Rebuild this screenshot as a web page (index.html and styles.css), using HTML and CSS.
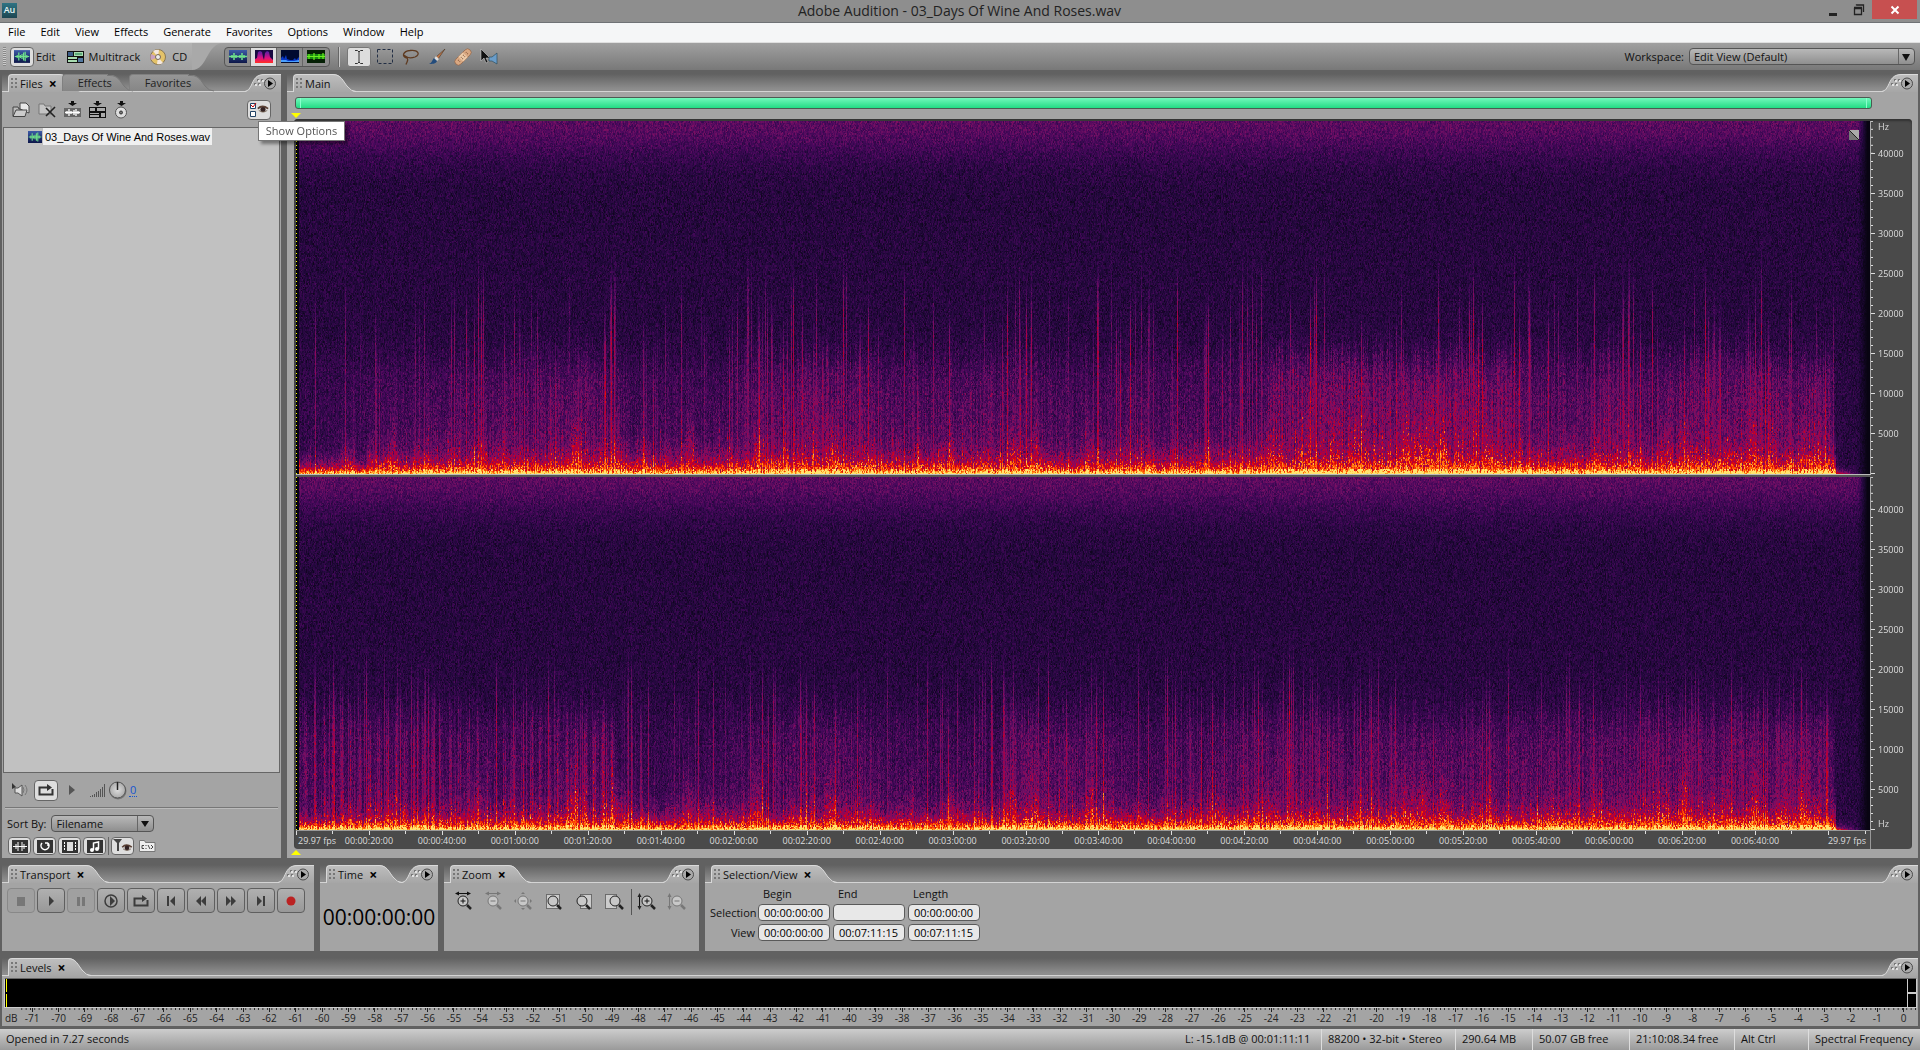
FILE: index.html
```html
<!DOCTYPE html>
<html lang="en">
<head>
<meta charset="utf-8">
<title>Adobe Audition - 03_Days Of Wine And Roses.wav</title>
<link rel="stylesheet" href="styles.css">
</head>
<body>
<svg class="defs" aria-hidden="true">
  <defs>
    <linearGradient id="gTab" x1="0" y1="0" x2="0" y2="1"><stop offset="0" stop-color="#bebebe"/><stop offset="1" stop-color="#a6a6a6"/></linearGradient>
    <linearGradient id="gDim" x1="0" y1="0" x2="0" y2="1"><stop offset="0" stop-color="#969696"/><stop offset="1" stop-color="#868686"/></linearGradient>
    <linearGradient id="gBlue" x1="0" y1="0" x2="0" y2="1"><stop offset="0" stop-color="#3d5ba8"/><stop offset="1" stop-color="#0c1648"/></linearGradient>
    <linearGradient id="gSpec" x1="0" y1="0" x2="0" y2="1"><stop offset="0" stop-color="#5020a8"/><stop offset=".6" stop-color="#e01080"/><stop offset="1" stop-color="#ff3020"/></linearGradient>
    <radialGradient id="gKnob"><stop offset="0" stop-color="#ddd"/><stop offset="1" stop-color="#aaa"/></radialGradient>
  </defs>
  <symbol id="cap" viewBox="0 0 26 18"><path d="M0 0H3C11 0 13 7 17 12Q21 18 26 18H0Z" fill="url(#gTab)"/><path d="M0 .5H3C11 .5 13 7 17 12Q21 17.500 26 17.500" fill="none" stroke="#dadada"/></symbol>
  <symbol id="capdim" viewBox="0 0 26 18"><path d="M0 1H3C11 1 13 7 17 12Q21 17 26 17H0Z" fill="url(#gDim)"/><path d="M0 1.500H3C11 1.500 13 7 17 12Q21 17 26 17" fill="none" stroke="#777"/></symbol>
  <symbol id="corner" viewBox="0 0 36 18"><path d="M0 18Q4 17 6 12C9 5 11 0 20 0H36V18Z" fill="url(#gTab)"/><path d="M0 17.500Q4 17 6 12C9 5 11 .5 20 .5H36" fill="none" stroke="#dadada"/>
    <g fill="#777"><path d="M9 9h2v2h-2zM13 9h2v2h-2zM12 5h2v2h-2zM16 5h2v2h-2z"/></g><g fill="#e2e2e2"><path d="M10 10h2v2h-2zM14 10h2v2h-2zM13 6h2v2h-2zM17 6h2v2h-2z"/></g>
    <circle cx="25" cy="9.500" r="5.500" fill="#aaa" stroke="#4c4c4c"/><path d="M23 6v7l5-3.500z" fill="#000"/></symbol>
  <symbol id="wave" viewBox="0 0 20 16"><path d="M0 0h20v16H0z" fill="url(#gBlue)"/><path d="M1 8h18M4 6v4M6 3v10M8 6v4M10 5v6M12 3v10M14 2v12M16 6v4" stroke="#6fe28c" stroke-width="1.500"/></symbol>
  <symbol id="multi" viewBox="0 0 17 12"><path d="M0 0h17v12H0z" fill="#111"/><path d="M1 1h5v4H1z" fill="#3c5c88"/><path d="M7 1h9v4H7zM1 6h9v2H1zM1 9h9v2H1z" fill="#a8dcb0"/><path d="M11 7h5v4h-5z" fill="#5378a0"/><path d="M8 3h7" stroke="#174"/></symbol>
  <symbol id="loop" viewBox="0 0 16 14"><path d="M5 4.500H1.500V11.500H14.500V6" fill="none" stroke="currentColor" stroke-width="2"/><path d="M5 3.500h4V1l5 3.500L9 8V5.500H5z" fill="currentColor"/></symbol>
  <symbol id="mag" viewBox="0 0 20 20"><circle cx="9" cy="9" r="5" fill="#c8c8c8" stroke="currentColor"/><path d="M13 13l4 4" stroke="currentColor" stroke-width="2.500"/></symbol>
  <symbol id="eye" viewBox="0 0 14 10"><path d="M1 5Q6 0 13 5Q7 10 1 5z" fill="#ddd"/><path d="M1 4Q6-1 13 4" fill="none" stroke="#5a4034" stroke-width="2"/><circle cx="7" cy="5" r="3" fill="#322"/><path d="M2 6Q7 10 12 6" stroke="#765" fill="none"/></symbol>
</svg>

<header class="titlebar">
  <span class="logo">Au</span>
  <h1>Adobe Audition - 03_Days Of Wine And Roses.wav</h1>
  <div class="winbtns">
    <button type="button" aria-label="Minimize"><svg width="10" height="14"><path d="M1 10h8v3H1z" fill="#222"/></svg></button>
    <button type="button" aria-label="Restore"><svg width="12" height="12"><path d="M1.500 4.500h7v6h-7zM1 3.500h8M3.500 1.500V1h7v7" fill="none" stroke="#222" stroke-width="1.300"/></svg></button>
    <button type="button" class="close" aria-label="Close"><svg width="10" height="10"><path d="M1.500 1.500l7 7M8.500 1.500l-7 7" stroke="#fff" stroke-width="2"/></svg></button>
  </div>
</header>
<nav class="menubar">
  <button type="button">File</button><button type="button">Edit</button><button type="button">View</button><button type="button">Effects</button><button type="button">Generate</button><button type="button">Favorites</button><button type="button">Options</button><button type="button">Window</button><button type="button">Help</button>
</nav>

<div class="toolbar">
  <div class="modes">
    <span class="handle"></span>
    <button type="button" class="mode"><span class="pressed"><svg width="16" height="15"><use href="#wave"/></svg></span>Edit</button>
    <button type="button" class="mode multi"><svg width="17" height="12"><use href="#multi"/></svg>Multitrack</button>
    <button type="button" class="mode cd"><svg width="16" height="16" viewBox="0 0 16 16"><circle cx="8" cy="8" r="7.500" fill="#e4c268" stroke="#875"/><path d="M8 8L3 2A8 8 0 0 1 9 .8zM8 8l5 6a8 8 0 0 1-6 1z" fill="#f4e8e0"/><path d="M8 8L1 5a8 8 0 0 0 0 6z" fill="#c9a0c0"/><circle cx="8" cy="8" r="2.500" fill="#eee" stroke="#765"/></svg>CD</button>
  </div>
  <svg class="sweep" width="32" height="27" viewBox="0 0 32 27"><path d="M0 0H32C14 0 16 27 0 27Z" fill="#a9a9a9"/></svg>
  <div class="views">
    <button type="button" aria-label="Waveform view"><svg width="18" height="13" viewBox="0 0 18 13"><path d="M0 0h18v13H0z" fill="url(#gBlue)"/><path d="M0 6.500h18M3 5v3M5 3v7M7 5v3M11 5v3M13 3v7M15 5v3" stroke="#6fe28c" stroke-width="1.500"/></svg></button>
    <button type="button" class="on" aria-label="Spectral frequency view"><svg width="18" height="13" viewBox="0 0 18 13"><path d="M0 0h18v13H0z" fill="#180a40"/><path d="M0 13V9l2-1 1-6 2-1 2 1 1 5 1 3 1-7 2-2 2 1 1 5 3 3v3z" fill="url(#gSpec)"/></svg></button>
    <button type="button" aria-label="Spectral pan view"><svg width="18" height="13" viewBox="0 0 18 13"><path d="M0 0h18v13H0z" fill="#000a30"/><path d="M0 12V8l2-2 1 3 2-4 1 4 3 1 3 0 2-2 1 2 3-3v5z" fill="#0838c8"/><path d="M0 10h5l2 1h6l5-1v2H0z" fill="#4aa0ff"/></svg></button>
    <button type="button" aria-label="Spectral phase view"><svg width="18" height="13" viewBox="0 0 18 13"><path d="M0 0h18v13H0z" fill="#052005"/><path d="M0 4h18v5H0z" fill="#188a10"/><path d="M0 6.500h18M2 4v5M7 3v7M12 4v5M16 3v6" stroke="#6cf020" stroke-width="1.200"/></svg></button>
  </div>
  <span class="sep"></span>
  <div class="tools">
    <button type="button" class="on" aria-label="Time selection"><svg width="10" height="16" viewBox="0 0 10 16"><path d="M1 1.500h2.500L5 3l1.500-1.500H9M1 14.500h2.500L5 13l1.500 1.500H9M5 3v10" fill="none" stroke="#333"/></svg></button>
    <button type="button" aria-label="Marquee selection"><svg width="16" height="15" viewBox="0 0 16 15"><path d="M.5 .5h15v14H.5z" fill="none" stroke="#222e44" stroke-dasharray="3 2"/></svg></button>
    <button type="button" aria-label="Lasso"><svg width="18" height="16" viewBox="0 0 18 16"><path d="M5 9C-1 8 1 2 8 1.500c8-1 11 4 5 6.500-3 1-7 1-9-.5-3-2-1-1 1 1 2 3 0 4-1 7" fill="none" stroke="#5e3a20" stroke-width="1.300"/></svg></button>
    <button type="button" aria-label="Paintbrush"><svg width="17" height="16" viewBox="0 0 17 16"><path d="M16 0l-7 10-2-2z" fill="#c47848" stroke="#432" stroke-width=".6"/><path d="M7 7l3 3-2 2-3-2z" fill="#ddd"/><path d="M5 9l3 3c-1 3-5 3-8 3 3-1 3-4 5-6z" fill="#234c7c"/></svg></button>
    <button type="button" aria-label="Spot healing"><svg width="18" height="18" viewBox="0 0 18 18"><g transform="rotate(-45 9 9)"><rect x="-1" y="5.500" width="20" height="7" rx="3.500" fill="#d9a882" stroke="#8a5c40" stroke-width=".6"/><path d="M6 5.500h6v7H6z" fill="#eccaa8"/><path d="M3 8h1M3 10h1M7 8h1M10 8h1M7 10h1M10 10h1M14 8h1M14 10h1" stroke="#8a5a3c"/></g></svg></button>
    <button type="button" aria-label="Scrub"><svg width="18" height="16" viewBox="0 0 18 16"><path d="M1 0v12l3-3 2 5 2-1-2-4h4z" fill="#111" stroke="#ddd" stroke-width=".5"/><path d="M9 8h3l5-4v11l-5-3H9z" fill="#6a9cc8" stroke="#245" stroke-width=".6"/></svg></button>
  </div>
  <label class="lbl" for="ws">Workspace:</label>
  <span class="drop ws"><select id="ws"><option>Edit View (Default)</option></select><svg width="8" height="7"><path d="M0 0h8L4 7z"/></svg></span>
</div>

<main class="work">
  <div class="upper">
    <section class="panel files">
      <div class="strip">
        <span class="tab"><i class="dots"></i><button type="button">Files</button><button type="button" class="x" aria-label="Close Files">×</button></span><svg class="cap" width="26" height="18"><use href="#cap"/></svg>
        <span class="tab dim t2"><button type="button">Effects</button></span><svg class="cap" width="26" height="18"><use href="#capdim"/></svg>
        <span class="tab dim t3"><button type="button">Favorites</button></span><svg class="cap" width="26" height="18"><use href="#capdim"/></svg>
        <button type="button" class="corner" aria-label="Panel menu"><svg width="36" height="18"><use href="#corner"/></svg></button>
      </div>
      <div class="body">
        <div class="filetools">
          <button type="button" aria-label="Import file"><svg width="18" height="16" viewBox="0 0 18 16"><path d="M1 14V5h5l1 2h3" fill="#bbb" stroke="#444"/><path d="M8 7V1h6l3 3v7z" fill="#e8e8e8" stroke="#444"/><path d="M1 14.500L4 8h11l-2 6.500z" fill="#ccc" stroke="#444"/></svg></button>
          <button type="button" aria-label="Close file"><svg width="18" height="16" viewBox="0 0 18 16"><path d="M1 12V2h5l1 2h6v8z" fill="#c4c4c4" stroke="#777"/><path d="M8 6l9 9M17 5l-9 9" stroke="#222" stroke-width="1.600"/></svg></button>
          <button type="button" aria-label="Edit file"><svg width="17" height="17" viewBox="0 0 17 17"><path d="M7 0h3v2h3L8.500 5 4 2h3z"/><path d="M0 7h17v9H0z" fill="#666"/><path d="M1 11.500h15M3 10v3M5 8v7M7 10v3M10 9v5M12 8v7M14 10v3" stroke="#fff" stroke-width="1.300"/></svg></button>
          <button type="button" aria-label="Insert into multitrack"><svg width="17" height="17" viewBox="0 0 17 17"><path d="M7 0h3v2h3L8.500 5 4 2h3zM0 6h17v11H0z"/><path d="M1 7h5v3H1zM8 7h8v3H8zM1 12h9v1H1zM1 14h9v2H1zM12 12h4v4h-4z" fill="#aaa"/></svg></button>
          <button type="button" aria-label="Insert into CD"><svg width="14" height="18" viewBox="0 0 14 18"><circle cx="7" cy="11.500" r="5.500" fill="#ddd" stroke="#555"/><circle cx="7" cy="11.500" r="1.500" fill="#777" stroke="#333"/><path d="M6 0h3v2h3L7.500 5 3 2h3z"/></svg></button>
          <button type="button" class="opt" aria-label="Show Options"><svg width="20" height="16" viewBox="0 0 20 16"><path d="M1.500 1.500h5v5h-5zM1.500 9.500h5v5h-5z" fill="#fff" stroke="#246"/><path d="M2 3l2 2 3-4" fill="none" stroke="#c00"/><use href="#eye" x="8" y="3" width="12" height="9"/></svg></button>
          <span class="tip" role="tooltip">Show Options</span>
        </div>
        <ul class="list"><li><svg width="14" height="12" viewBox="0 0 20 16" preserveAspectRatio="none"><use href="#wave"/></svg><button type="button">03_Days Of Wine And Roses.wav</button></li></ul>
        <div class="preview">
          <button type="button" aria-label="Auto-play"><svg width="18" height="16" viewBox="0 0 18 16"><path d="M1 1v6l4-2z" fill="#333"/><path d="M4 6h3l4-3v11l-4-3H4z" fill="#ddd" stroke="#555"/><path d="M12 5q2 3 0 6M14 3q4 5 0 10" fill="none" stroke="#777"/></svg></button>
          <button type="button" class="lit" aria-label="Loop"><svg width="16" height="14"><use href="#loop"/></svg></button>
          <button type="button" class="play" aria-label="Play"><svg width="7" height="10"><path d="M0 0l6 5-6 5z" fill="#555"/></svg></button>
          <svg width="16" height="14"><path d="M1.500 13v1M3.500 12v2M5.500 11v3M7.500 9v5M9.500 8v6M11.500 6v8M13.500 4v10M15.500 1v13" stroke="#555"/></svg>
          <svg width="19" height="19"><circle cx="10" cy="10" r="8.500" fill="#777"/><circle cx="9.500" cy="9" r="8" fill="url(#gKnob)" stroke="#555"/><path d="M9.500 1v8" stroke="#222" stroke-width="1.500"/></svg>
          <a href="#volume">0</a>
        </div>
        <hr>
        <div class="sort"><label for="sb">Sort By:</label><span class="drop"><select id="sb"><option>Filename</option></select><svg width="8" height="6"><path d="M0 0h8L4 6z"/></svg></span></div>
        <div class="filters">
          <button type="button" aria-label="Show audio"><svg width="16" height="13"><path d="M0 0h16v13H0z" fill="#333"/><path d="M1 6.500h14M4 4v5M6 2v9M10 2v9M12 4v5" stroke="#fff"/></svg></button>
          <button type="button" aria-label="Show loops"><svg width="16" height="13"><path d="M0 0h16v13H0z" fill="#333"/><path d="M5 3a4 4 0 1 0 6 0M11 3v3M11 3h-3" stroke="#fff" stroke-width="1.500" fill="none"/></svg></button>
          <button type="button" aria-label="Show video"><svg width="16" height="13"><path d="M0 0h16v13H0z" fill="#333"/><path d="M5 2h6v9H5z" fill="#ddd"/><path d="M2.500 2v9M13.500 2v9" stroke="#fff" stroke-dasharray="2 1"/></svg></button>
          <button type="button" aria-label="Show MIDI"><svg width="16" height="13"><path d="M0 0h16v13H0z" fill="#333"/><path d="M6.500 10V3l5-1v7" stroke="#fff" stroke-width="1.500" fill="none"/><circle cx="5" cy="10" r="2" fill="#fff"/><circle cx="10" cy="9" r="2" fill="#fff"/></svg></button>
          <i></i>
          <button type="button" aria-label="Filter"><svg width="20" height="14"><path d="M0 0h9L6 4v8H4V4z" fill="#444"/><use href="#eye" x="8" y="5" width="12" height="8"/></svg></button>
          <button type="button" class="flat" aria-label="Full paths"><svg width="17" height="14"><path d="M.5 12.500V1.500h5l1 2h9.500v9z" fill="#eee" stroke="#777"/><path d="M5 6.500H3v3h2M7 6v1M7 9v1M9 6l2 4M12 6l2 2-2 2" stroke="#444" fill="none"/></svg></button>
        </div>
      </div>
    </section>

    <section class="panel mainview">
      <div class="strip">
        <span class="tab"><i class="dots"></i><button type="button">Main</button></span><svg class="cap" width="26" height="18"><use href="#cap"/></svg>
        <button type="button" class="corner" aria-label="Panel menu"><svg width="36" height="18"><use href="#corner"/></svg></button>
      </div>
      <div class="body">
        <div class="range"></div>
        <div class="cue"><svg width="10" height="6"><path d="M0 0h10L5 5z" fill="#ff0"/></svg></div>
        <div class="scope">
          <div class="chan"><canvas class="spec" data-channel="0"></canvas><button type="button" class="hint" aria-label="Display settings"><svg width="10" height="10"><path d="M0 0h10v10z" fill="#aaa"/><path d="M0 0v10h10z" fill="#777"/><path d="M0 0l10 10" stroke="#222"/></svg></button></div>
          <div class="hz"><span class="unit">Hz</span></div>
          <div class="divider"></div>
          <div class="chan"><canvas class="spec" data-channel="1"></canvas></div>
          <div class="hz"><span class="unit low">Hz</span></div>
          <div class="time"><span class="fps">29.97 fps</span><span class="fps right">29.97 fps</span></div>
        </div>
        <div class="cue"><svg width="10" height="6"><path d="M0 5h10L5 0z" fill="#ff0"/></svg></div>
      </div>
    </section>
  </div>

  <div class="lower">
    <section class="panel transport">
      <div class="strip"><span class="tab"><i class="dots"></i><button type="button">Transport</button><button type="button" class="x" aria-label="Close Transport">×</button></span><svg class="cap" width="26" height="18"><use href="#cap"/></svg><button type="button" class="corner" aria-label="Panel menu"><svg width="36" height="18"><use href="#corner"/></svg></button></div>
      <div class="body">
        <button type="button" disabled aria-label="Stop"><svg width="16" height="14"><path d="M4 3h8v9H4z"/></svg></button>
        <button type="button" aria-label="Play"><svg width="16" height="14"><path d="M6 2l5 5-5 5z"/></svg></button>
        <button type="button" disabled aria-label="Pause"><svg width="16" height="14"><path d="M4 3h3v9H4zM9 3h3v9H9z"/></svg></button>
        <button type="button" aria-label="Play to end"><svg width="16" height="14"><circle cx="8" cy="7" r="6" fill="none" stroke="currentColor" stroke-width="1.500"/><path d="M7 2l5 5-5 5z"/></svg></button>
        <button type="button" aria-label="Play looped"><svg width="16" height="14"><use href="#loop"/></svg></button>
        <button type="button" aria-label="Go to beginning"><svg width="16" height="14"><path d="M4 2h2v10H4zM12 2v10L7 7z"/></svg></button>
        <button type="button" aria-label="Rewind"><svg width="16" height="14"><path d="M8 2v10L3 7zM13 2v10L8 7z"/></svg></button>
        <button type="button" aria-label="Fast forward"><svg width="16" height="14"><path d="M3 2v10l5-5zM8 2v10l5-5z"/></svg></button>
        <button type="button" aria-label="Go to end"><svg width="16" height="14"><path d="M10 2h2v10h-2zM4 2v10l5-5z"/></svg></button>
        <button type="button" aria-label="Record"><svg width="16" height="14"><circle cx="8" cy="7" r="4.500" fill="#b22"/></svg></button>
      </div>
    </section>
    <section class="panel clock">
      <div class="strip"><span class="tab"><i class="dots"></i><button type="button">Time</button><button type="button" class="x" aria-label="Close Time">×</button></span><svg class="cap" width="26" height="18"><use href="#cap"/></svg><button type="button" class="corner" aria-label="Panel menu"><svg width="36" height="18"><use href="#corner"/></svg></button></div>
      <div class="body"><output>00:00:00:00</output></div>
    </section>
    <section class="panel zoom">
      <div class="strip"><span class="tab"><i class="dots"></i><button type="button">Zoom</button><button type="button" class="x" aria-label="Close Zoom">×</button></span><svg class="cap" width="26" height="18"><use href="#cap"/></svg><button type="button" class="corner" aria-label="Panel menu"><svg width="36" height="18"><use href="#corner"/></svg></button></div>
      <div class="body">
        <button type="button" aria-label="Zoom in horizontally"><svg width="20" height="20"><use href="#mag"/><path d="M2 1.500h14M6.500 9h5M9 6.500v5" stroke="#111"/><path d="M1 1.500l4-2v4zM17 1.500l-4-2v4z" fill="#111"/></svg></button>
        <button type="button" disabled aria-label="Zoom out horizontally"><svg width="20" height="20"><use href="#mag"/><path d="M2 1.500h14M6.500 9h5" stroke="currentColor"/><path d="M1 1.500l4-2v4zM17 1.500l-4-2v4z"/></svg></button>
        <button type="button" disabled aria-label="Zoom out full"><svg width="20" height="20"><use href="#mag"/><path d="M6.500 9h5" stroke="currentColor"/><path d="M9 0l2 2H7zM9 18l2-2H7zM0 9l2-2v4zM18 9l-2-2v4z"/></svg></button>
        <button type="button" aria-label="Zoom to selection"><svg width="20" height="20"><path d="M2.500 2.500h13v14h-13z" fill="#ccc" stroke="#222" stroke-dasharray="1 1"/><use href="#mag"/></svg></button>
        <button type="button" aria-label="Zoom to left edge"><svg width="20" height="20"><path d="M6.500 2.500h11v14h-11z" fill="#ccc" stroke="#222" stroke-dasharray="1 1"/><use href="#mag" x="-1"/></svg></button>
        <button type="button" aria-label="Zoom to right edge"><svg width="20" height="20"><path d="M1.500 2.500h11v14h-11z" fill="#ccc" stroke="#222" stroke-dasharray="1 1"/><use href="#mag" x="2"/></svg></button>
        <i></i>
        <button type="button" aria-label="Zoom in vertically"><svg width="20" height="20"><use href="#mag" x="1"/><path d="M2.500 3v13M7.500 9h5M10 6.500v5" stroke="#111"/><path d="M2.500 1l2 4h-4zM2.500 18l2-4h-4z"/></svg></button>
        <button type="button" disabled aria-label="Zoom out vertically"><svg width="20" height="20"><use href="#mag" x="1"/><path d="M2.500 3v13M7.500 9h5" stroke="currentColor"/><path d="M2.500 1l2 4h-4zM2.500 18l2-4h-4z"/></svg></button>
      </div>
    </section>
    <section class="panel selview">
      <div class="strip"><span class="tab"><i class="dots"></i><button type="button">Selection/View</button><button type="button" class="x" aria-label="Close Selection/View">×</button></span><svg class="cap" width="26" height="18"><use href="#cap"/></svg><button type="button" class="corner" aria-label="Panel menu"><svg width="36" height="18"><use href="#corner"/></svg></button></div>
      <div class="body">
        <span></span><span class="col">Begin</span><span class="col">End</span><span class="col">Length</span>
        <label for="s1">Selection</label><input id="s1" value="00:00:00:00"><input aria-label="Selection end"><input aria-label="Selection length" value="00:00:00:00">
        <label for="v1">View</label><input id="v1" value="00:00:00:00"><input aria-label="View end" value="00:07:11:15"><input aria-label="View length" value="00:07:11:15">
      </div>
    </section>
  </div>

  <section class="panel levels">
    <div class="strip"><span class="tab"><i class="dots"></i><button type="button">Levels</button><button type="button" class="x" aria-label="Close Levels">×</button></span><svg class="cap" width="26" height="18"><use href="#cap"/></svg><button type="button" class="corner" aria-label="Panel menu"><svg width="36" height="18"><use href="#corner"/></svg></button></div>
    <div class="body">
      <div class="meter"><div class="bars"><i></i><i></i></div><div class="clip"><i></i><i></i></div></div>
      <div class="db"><span class="unit">dB</span></div>
    </div>
  </section>
</main>

<footer class="status">
  <span class="msg">Opened in 7.27 seconds</span><span class="peak">L: -15.1dB @ 00:01:11:11</span><span class="c1">88200 • 32-bit • Stereo</span><span class="c2">290.64 MB</span><span class="c3">50.07 GB free</span><span class="c4">21:10:08.34 free</span><span class="c5">Alt Ctrl</span><span class="c6">Spectral Frequency</span>
</footer>
<script src="app.js"></script>
</body>
</html>
```
FILE: styles.css
```css
* { box-sizing: border-box; }
body { margin: 0; min-height: 100vh; display: flex; flex-direction: column; background: #616161; color: #111; font: 11px/14px "Open Sans", "Noto Sans", sans-serif; }
button, select, input { font: inherit; color: inherit; }
button { display: flex; align-items: center; justify-content: center; flex: none; padding: 0; border: 0; background: none; }
svg { display: block; flex: none; overflow: visible; fill: currentColor; }
.defs { position: absolute; width: 0; height: 0; }

.titlebar { display: grid; grid-template-columns: 1fr auto 1fr; height: 23px; background: #8e8e8e; border-bottom: 1px solid #6f7275; }
.logo { width: 15px; height: 15px; margin: 3px 2px; background: linear-gradient(#2f7383, #1d4652); color: #e4f4f4; font-size: 9px; line-height: 14px; font-weight: 600; text-align: center; }
.titlebar h1 { margin: 0; padding-right: 1px; font-size: 14px; line-height: 22px; font-weight: 400; color: #222; }
.winbtns { display: flex; justify-content: flex-end; height: 19px; padding-right: 3px; }
.winbtns button { width: 26px; }
.winbtns .close { width: 45px; background: #c75050; }

.menubar { display: flex; gap: 15px; height: 20px; padding: 0 8px 1px; background: #f5f6f7; border-bottom: 1px solid #dfdfdf; }
.menubar button { color: #000; }

.toolbar { display: flex; align-items: center; height: 27px; padding-right: 5px; background: linear-gradient(#a0a0a0, #787878); }
.modes { display: flex; align-items: center; align-self: stretch; min-width: 192px; padding-left: 3px; background: linear-gradient(#b2b2b2, #a2a2a2); }
.handle { width: 3px; height: 19px; margin-right: 4px; background: repeating-linear-gradient(#888 0 1px, #ccc 1px 2px); }
.mode { gap: 2px; }
.mode.multi { gap: 5px; margin-left: 11px; }
.mode.cd { gap: 6px; margin-left: 10px; }
.pressed { display: grid; place-items: center; width: 24px; height: 20px; border: 1px solid #666; border-radius: 4px; background: #ddd; }
.views { display: flex; height: 20px; border: 1px solid #555; border-radius: 4px; background: #8c8c8c; }
.views button { width: 26px; border-right: 1px solid #666; }
.views button:last-child { border: 0; }
.views .on, .tools .on { background: #ddd; }
.sep { width: 2px; height: 20px; margin: 0 7px 0 8px; background: #c8c8c8; border-left: 1px solid #666; }
.tools { display: flex; flex: 1; gap: 2px; }
.tools button { width: 24px; height: 20px; border-radius: 3px; }
.tools .on { border: 1px solid #777; }
.lbl { margin-right: 5px; }
.drop { position: relative; display: inline-flex; height: 17px; border: 1px solid #555; border-radius: 4px; background: linear-gradient(#b8b8b8, #8f8f8f); }
.drop select { width: 100%; padding: 0 20px 0 4px; appearance: none; border: 0; background: none; line-height: 14px; }
.drop svg { position: absolute; right: 4px; top: 5px; pointer-events: none; }
.drop::after { content: ""; position: absolute; right: 15px; top: 0; bottom: 0; border-left: 1px solid #666; }
.ws { width: 226px; }

.work { flex: 1; display: flex; flex-direction: column; gap: 7px; padding: 4px 2px 3px; }
.upper, .lower { display: flex; gap: 6px; }
.upper { flex: 1; }
.lower { min-height: 86px; }
.panel { display: flex; flex-direction: column; }
.strip { display: flex; height: 18px; padding-left: 6px; background: linear-gradient(#616161, #8e8e8e 90%); border-bottom: 1px solid #d4d4d4; }
.tab { display: flex; align-items: center; height: 18px; background: linear-gradient(#bebebe, #a6a6a6); border: 1px solid #d8d8d8; border-width: 1px 0 0 1px; border-top-left-radius: 4px; }
.tab button { position: relative; z-index: 1; }
.cap { margin-left: -1px; }
.dots { width: 6px; height: 12px; margin: 0 3px 0 2px; background: radial-gradient(circle at 1px 1px, #777 1px, transparent 1px) 0 0 / 4px 4px; }
.x { margin-left: 6px; font-size: 14px; font-weight: 700; line-height: 10px; color: #000; }
.tab.dim { height: 17px; background: linear-gradient(#969696, #868686); border-color: #808080; color: #222; }
.tab.t2 { width: 46px; padding-left: 15px; margin-left: -19px; }
.tab.t3 { width: 60px; padding-left: 15px; margin-left: -3px; }
.files .cap { margin-right: -1px; }
.files .tab:first-child { position: relative; }
.corner { margin-left: auto; }
.panel > .body { flex: 1; background: #a4a4a4; }

.files { width: 279px; }
.files .body { display: flex; flex-direction: column; }
.filetools { position: relative; display: flex; align-items: center; gap: 8px; height: 35px; padding: 0 10px; }
.files .opt { width: 24px; height: 20px; margin: 0 0 0 auto; }
.opt, .lit, .filters button { border: 1px solid #666; border-radius: 4px; background: #dedede; }
.tip { position: absolute; z-index: 2; left: 256px; top: 29px; width: 87px; height: 20px; border: 1px solid #767676; background: #fff; color: #555; font-size: 11px; line-height: 17px; text-align: center; white-space: nowrap; box-shadow: 3px 3px 3px #0006; }
.list { flex: 1; margin: 0 1px; padding: 0 0 0 24px; border: 1px solid #666; background: #c1c1c1; list-style: none; }
.list li { display: flex; align-items: center; }
.list button { height: 17px; margin-left: 1px; padding: 0 2px; background: #f0f0f0; color: #000; font: 11px/16px "Liberation Sans", Arial, sans-serif; }
.preview { display: flex; align-items: center; height: 34px; padding-left: 9px; }
.preview a { margin-left: 2px; color: #1554d0; text-decoration: none; border-bottom: 1px dotted; line-height: 13px; padding: 0 1px; }
.preview .lit { width: 24px; height: 21px; margin: 0 10px 0 5px; color: #333; }
.preview .play { width: 8px; margin-right: 13px; }
.preview svg + svg { margin-left: 3px; }
hr { width: calc(100% - 6px); margin: 0 3px; border: 0; border-top: 1px solid #777; border-bottom: 1px solid #bbb; }
.sort { display: flex; align-items: center; gap: 5px; height: 26px; padding-top: 3px; padding-left: 5px; }
.sort .drop { width: 103px; }
.filters { display: flex; align-items: center; gap: 2px; height: 22px; margin-bottom: 1px; padding-left: 6px; }
.filters button { width: 23px; height: 18px; }
.filters .flat { border: 0; background: none; }
.filters i { width: 1px; height: 18px; background: #666; }

.mainview { flex: 1; min-width: 0; }
.mainview .body { display: flex; flex-direction: column; padding: 5px 6px 0 7px; }
.range { height: 12px; margin: 0 40px 0 1px; border: 1px solid #4c5a52; border-radius: 3px; background: linear-gradient(90deg, transparent 4px, #8fc 4px 5px, transparent 5px calc(100% - 5px), #8fc calc(100% - 5px) calc(100% - 4px), transparent 0), linear-gradient(#72f8bc, #22dc84); }
.cue { height: 10px; padding-top: 4px; margin-left: -3px; }
.cue:last-child { height: 9px; padding-top: 1px; }
.scope { flex: 1; display: grid; grid-template: 353fr 3px 353fr 19px / 1fr 41px; min-height: 300px; padding: 2px 0 0 2px; background: #4a4a4a; border-radius: 4px; box-shadow: inset 0 2px 2px #333; }
.chan { position: relative; border-right: 1px solid #aaa; background: #000; }
.chan::after { content: ""; position: absolute; left: 0; top: 0; bottom: 0; width: 1px; background: repeating-linear-gradient(#ff0 0 1px, #000 1px 4px); }
.spec { position: absolute; inset: 0; width: 100%; height: 100%; }
.hint { position: absolute; right: 11px; top: 9px; }
.divider { grid-column: 1; border-top: 1px solid #bbb; background: #555; }
.divider + .chan { grid-column: 1; }
.hz { position: relative; display: flex; flex-direction: column; color: #ddd; font-size: 9px; line-height: 12px; }
.hz b { position: relative; display: flex; align-items: flex-end; flex: 5000 0 0; min-height: 0; font-weight: 400; background: linear-gradient(to top, #ddd 1px, transparent 1px) 0 100% / 2px 20% repeat-y; }
.hz b:first-of-type { flex-grow: 4100; background-size: 2px 8px; }
.hz b::after { content: ""; position: absolute; left: 0; bottom: 0; width: 4px; height: 1px; background: #ddd; }
.hz b span { margin: 0 0 -6px 7px; }
.hz .unit { position: absolute; left: 7px; top: 0; }
.hz .low { top: auto; bottom: 0; }
.time { position: relative; display: flex; border-top: 1px solid #999; border-right: 1px solid #999; color: #ddd; font-size: 9px; line-height: 12px; }
.time b { flex: 20 0 0; min-width: 0; display: flex; font-weight: 400; background: linear-gradient(#ddd, #ddd) 0 0 / 1px 4px no-repeat, linear-gradient(#ddd, #ddd) 50% 0 / 1px 3px no-repeat; }
.time b:last-of-type { flex-grow: 11.5; background-position: 0 0, 90% 0; }
.time b span { flex: none; width: 60px; margin: 4px 0 0 -30px; text-align: center; }
.time .fps { position: absolute; left: 2px; top: 4px; }
.time .right { left: auto; right: 4px; }

.transport { width: 312px; }
.transport .body { display: flex; align-items: flex-start; gap: 2px; padding: 5px; }
.transport .body button { width: 28px; height: 25px; border: 1px solid #5f5f5f; border-radius: 4px; background: linear-gradient(#b0b0b0, #989898); color: #3c3c3c; }
.transport .body button:disabled { border-color: #888; background: #a0a0a0; color: #777; }
.clock { width: 118px; }
.clock .body { display: grid; place-items: center; }
output { font-size: 21px; line-height: 28px; color: #000; }
.zoom { width: 255px; }
.zoom .body { display: flex; align-items: flex-start; gap: 10px; padding: 9px 0 0 10px; }
.zoom .body button { color: #222; }
.zoom .body button:disabled { color: #777; }
.zoom .body i { width: 1px; height: 26px; margin: -3px -5px 0 -3px; background: #555; }
.selview { flex: 1; }
.selview .body { display: grid; grid-template-columns: 45px repeat(3, 72px); grid-template-rows: 15px 17px 17px; align-content: start; align-items: center; gap: 3px; padding: 3px 5px; }
.selview .col { padding-left: 5px; }
.selview label { text-align: right; }
.selview input { width: 72px; height: 17px; padding: 0 5px; border: 1px solid #5a5a5a; border-radius: 4px; background: #e8e8e8; color: #000; }

.levels .body { min-height: 50px; padding: 2px 1px 0 2px; }
.meter { display: flex; gap: 1px; height: 30px; border: 1px solid #ccc; border-top-color: #666; background: #ccc; }
.bars { flex: 1; background: #000; display: grid; gap: 2px; padding-left: 1px; }
.bars i { width: 1px; background: #ff0; }
.clip { width: 8px; display: grid; gap: 2px; }
.clip i { background: #000; }
.db { position: relative; display: flex; padding-left: 15px; color: #222; font-size: 10px; line-height: 12px; }
.db b { flex: 1; min-width: 0; padding-top: 4px; font-weight: 400; text-align: center; background: linear-gradient(#222, #222) 50% 0 / 1px 4px no-repeat, linear-gradient(90deg, #222 1px, transparent 1px) 50% 0 / calc(100% / 6) 2px repeat-x; }
.db .unit { position: absolute; left: 1px; top: 4px; }

.status { display: flex; height: 21px; background: linear-gradient(#cdcdcd, #9a9a9a); line-height: 20px; white-space: nowrap; }
.status span { padding-left: 6px; border-left: 1px solid #ddd; }
.status .msg { flex: 1; border: 0; }
.status .peak { width: 142px; border: 0; }
.c1 { width: 134px; } .c2 { width: 77px; } .c3 { width: 97px; } .c4 { width: 105px; } .c5 { width: 74px; } .c6 { width: 112px; }
```
FILE: app.js
```js
// Rulers
document.querySelectorAll('.hz').forEach(function (hz) {
  for (let f = 40000; f >= 0; f -= 5000) {
    const cell = document.createElement('b');
    if (f) {
      const label = document.createElement('span');
      label.textContent = f;
      cell.append(label);
    }
    hz.append(cell);
  }
});
const time = document.querySelector('.time');
for (let s = 0; s <= 420; s += 20) {
  const cell = document.createElement('b');
  if (s && s < 420) {
    const label = document.createElement('span');
    label.textContent = '00:0' + Math.floor(s / 60) + ':' + String(s % 60).padStart(2, '0') + ':00';
    cell.append(label);
  }
  time.append(cell);
}
const db = document.querySelector('.db');
for (let d = -71; d <= 0; d++) {
  const cell = document.createElement('b');
  cell.textContent = d;
  db.append(cell);
}

// Colour map of the spectral display, from silence to full level
const stops = [[0, 8, 4, 18], [0.16, 34, 8, 60], [0.32, 72, 8, 92], [0.46, 118, 16, 100], [0.6, 165, 0, 75],
  [0.72, 215, 0, 15], [0.82, 255, 70, 0], [0.91, 255, 150, 30], [1, 255, 228, 112]];
const lut = [];
for (let i = 0; i < 256; i++) {
  const v = i / 255;
  let k = 1;
  while (stops[k][0] < v) k++;
  const a = stops[k - 1], b = stops[k], t = (v - a[0]) / (b[0] - a[0]);
  lut.push([1, 2, 3].map(c => a[c] + (b[c] - a[c]) * t));
}
// Broadband energy along the file: position in thousandths, level
const mids = [
  [[0, 0.05], [60, 0.13], [160, 0.19], [200, 0.2], [215, 0.1], [260, 0.12], [335, 0.25], [380, 0.16], [440, 0.2], [490, 0.14], [560, 0.14],
    [612, 0.14], [622, 0.28], [765, 0.29], [780, 0.19], [825, 0.19], [832, 0.26], [860, 0.19], [920, 0.26], [974, 0.25], [978, 0.02], [1000, 0]],
  [[0, 0.2], [70, 0.2], [80, 0.16], [140, 0.17], [200, 0.24], [206, 0.06], [250, 0.09], [335, 0.19], [400, 0.11], [445, 0.11], [455, 0.23],
    [500, 0.19], [530, 0.12], [615, 0.19], [690, 0.19], [740, 0.19], [800, 0.18], [900, 0.24], [974, 0.23], [978, 0.02], [1000, 0]]
];
// Louder low-frequency moments: position in thousandths, height
const peaks = [[32, 14], [62, 18], [115, 20], [177, 38], [203, 22], [249, 26], [293, 22], [340, 24], [415, 18], [455, 22], [470, 16], [505, 20],
  [580, 12], [618, 26], [673, 16], [705, 24], [716, 34], [728, 26], [758, 18], [826, 16], [870, 22], [882, 30], [908, 18], [925, 16], [958, 24], [966, 14]];
function curve(points, p) {
  let k = 1;
  while (k < points.length - 1 && points[k][0] < p) k++;
  const a = points[k - 1], b = points[k];
  return a[1] + (b[1] - a[1]) * (p - a[0]) / (b[0] - a[0]);
}
function draw(canvas) {
  const ch = +canvas.dataset.channel;
  const w = canvas.width = canvas.clientWidth, h = canvas.height = canvas.clientHeight;
  const ctx = canvas.getContext('2d'), img = ctx.createImageData(w, h);
  let seed = 9176 + ch * 331;
  const rnd = () => {
    seed = (seed + 0x6D2B79F5) | 0;
    let t = Math.imul(seed ^ (seed >>> 15), 1 | seed);
    t = (t + Math.imul(t ^ (t >>> 7), 61 | t)) ^ t;
    return ((t ^ (t >>> 14)) >>> 0) / 4294967296;
  };
  let bass = 0.4;
  for (let x = 0; x < w; x++) {
    const p = x / w * 1000, end = p > 978;
    let mid = curve(mids[ch], p) * (0.6 + 0.75 * rnd());
    if (ch === 1 && p < 206) mid *= x % 9 < 3 ? 1.4 : 0.7;
    const spike = !end && rnd() < 0.13 ? 0.1 + 0.24 * rnd() : 0;
    const reach = 110 + rnd() * (ch ? 50 : 85);
    const cutoff = 100 + rnd() * 30;
    bass = bass * 0.72 + rnd() * 0.28;
    let low = 6 + bass * 22 + (rnd() < 0.12 ? rnd() * 22 : 0);
    const heat = 0.08 + rnd() * 0.14;
    if (p < 45) low *= 0.6;
    for (const q of peaks) low += q[1] * 0.55 * Math.exp(-Math.pow((p - q[0]) / 3, 2));
    let noise = 0;
    for (let y = 0; y < h; y++) {
      const up = (h - 1 - y) * 353 / h, top = y * 353 / h;
      if (y % 2 === 0 || rnd() < 0.35) noise = rnd() + rnd() - 1;
      let v = 0.17 + noise * 0.14 + 0.2 * Math.exp(-Math.pow(top / 36, 2));
      const open = 1 / (1 + Math.exp((up - cutoff) / 9));
      let m = mid * open * (1.1 - 0.0025 * up) + noise * mid * 0.25 * open + mid * 0.1 * Math.exp(-up / 90);
      if (spike) m = Math.max(m, (spike + mid * 0.6) / (1 + Math.exp((up - reach) / 14)));
      v += Math.min(m, 0.5);
      if (end) {
        v += 0.6 * Math.exp(-up / 3) * Math.max(0, (994 - p) / 16);
      } else {
        const b = (0.3 - mid * 0.5) * Math.exp(-Math.pow(up / (low * 1.4), 2)) + heat * Math.exp(-Math.pow(up / (low * 0.7), 2)) + 0.3 * Math.exp(-up / 4);
        v += b;
        if (up < low * 1.5) v += noise * 0.07;
        if (up > 4) v = Math.min(v, 0.84 + noise * 0.14);
      }
      if (p > 992) v *= Math.max(0, (998 - p) / 6);
      if (x < 3) v = 0;
      const c = lut[Math.max(0, Math.min(255, Math.round(v * 255)))], i = (y * w + x) * 4;
      img.data[i] = c[0]; img.data[i + 1] = c[1]; img.data[i + 2] = c[2]; img.data[i + 3] = 255;
    }
  }
  ctx.putImageData(img, 0, 0);
}
const drawAll = () => document.querySelectorAll('.spec').forEach(draw);
drawAll();
addEventListener('resize', drawAll);
```
